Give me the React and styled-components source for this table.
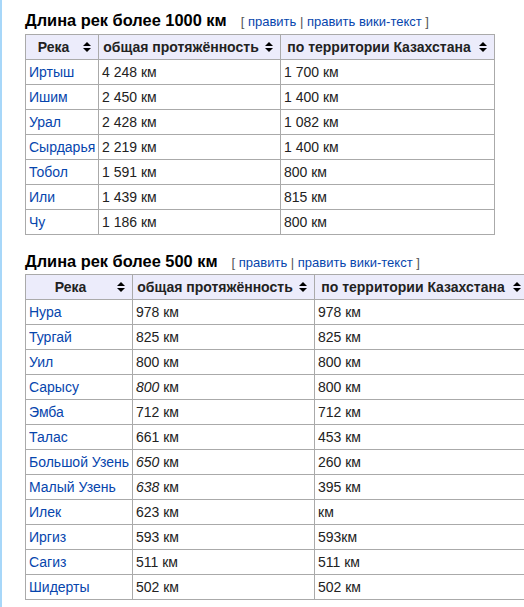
import React from 'react';
import styled, { createGlobalStyle } from 'styled-components';

const GlobalStyle = createGlobalStyle`
  html, body {
    margin: 0;
    padding: 0;
    background: #fff;
    overflow: hidden;
  }
  body {
    font-family: Arial, "Liberation Sans", sans-serif;
  }
`;

const Page = styled.div`
  width: 524px;
  height: 607px;
  overflow: hidden;
  box-sizing: border-box;
  border-left: 2px solid #a7d7f9;
  padding: 10px 0 0 23px;
`;

const Heading = styled.div`
  display: flex;
  align-items: baseline;
  gap: 14px;
  white-space: nowrap;
  margin-top: ${(props) => props.$top || 0}px;
  margin-bottom: ${(props) => props.$bottom || 4}px;
`;

const Title = styled.h3`
  margin: 0;
  font-family: Arial, "Liberation Sans", sans-serif;
  font-size: 16.4px;
  line-height: 20px;
  font-weight: bold;
  color: #000;
`;

const EditSection = styled.span`
  font-size: 13px;
  color: #555;
  a {
    color: #0645ad;
    text-decoration: none;
  }
`;

const Table = styled.table`
  border-collapse: collapse;
  border: 1px solid #aaa;
  font-size: 14px;
  line-height: 18px;
  color: #222;
  background: #fff;
  table-layout: fixed;
  width: ${(props) => props.$width}px;
  flex-shrink: 0;
`;

const Th = styled.th`
  position: relative;
  border: 1px solid #aaa;
  background: #ececfb;
  padding: 3px 21px 3px 4px;
  font-weight: bold;
  text-align: center;
  white-space: nowrap;
  color: #222;
`;

const Td = styled.td`
  border: 1px solid #aaa;
  padding: 3px 3px;
  white-space: nowrap;
  text-align: left;
`;

const RiverLink = styled.a`
  color: #0645ad;
  text-decoration: none;
`;

const SortIcon = styled.svg`
  position: absolute;
  right: 7px;
  top: 50%;
  margin-top: -5px;
`;

function Sort() {
  return (
    <SortIcon width='8' height='10' viewBox='0 0 8 10'>
      <path d='M0 4 L4 0 L8 4 Z M0 6 L8 6 L4 10 Z' fill='#000' />
    </SortIcon>
  );
}

const BIG = [
  ['Иртыш', '4 248 км', '1 700 км'],
  ['Ишим', '2 450 км', '1 400 км'],
  ['Урал', '2 428 км', '1 082 км'],
  ['Сырдарья', '2 219 км', '1 400 км'],
  ['Тобол', '1 591 км', '800 км'],
  ['Или', '1 439 км', '815 км'],
  ['Чу', '1 186 км', '800 км'],
];

// italic numbers are marked with a leading "*"
const MEDIUM = [
  ['Нура', '978 км', '978 км'],
  ['Тургай', '825 км', '825 км'],
  ['Уил', '800 км', '800 км'],
  ['Сарысу', '*800', '800 км'],
  ['Эмба', '712 км', '712 км'],
  ['Талас', '661 км', '453 км'],
  ['Большой Узень', '*650', '260 км'],
  ['Малый Узень', '*638', '395 км'],
  ['Илек', '623 км', 'км'],
  ['Иргиз', '593 км', '593км'],
  ['Сагиз', '511 км', '511 км'],
  ['Шидерты', '502 км', '502 км'],
];

function Length({ value }) {
  if (value.startsWith('*')) {
    return (
      <>
        <i>{value.slice(1)}</i> км
      </>
    );
  }
  return value;
}

function RiverTable({ rows, widths }) {
  const total = widths.reduce((a, b) => a + b, 0);
  return (
    <Table $width={total}>
      <colgroup>
        {widths.map((w, i) => (
          <col key={i} style={{ width: w }} />
        ))}
      </colgroup>
      <thead>
        <tr>
          <Th>
            Река
            <Sort />
          </Th>
          <Th>
            общая протяжённость
            <Sort />
          </Th>
          <Th>
            по территории Казахстана
            <Sort />
          </Th>
        </tr>
      </thead>
      <tbody>
        {rows.map((r) => (
          <tr key={r[0]}>
            <Td>
              <RiverLink href='#'>{r[0]}</RiverLink>
            </Td>
            <Td>
              <Length value={r[1]} />
            </Td>
            <Td>{r[2]}</Td>
          </tr>
        ))}
      </tbody>
    </Table>
  );
}

function Edit() {
  return (
    <EditSection>
      [ <a href='#'>править</a> | <a href='#'>править вики-текст</a> ]
    </EditSection>
  );
}

export default function App() {
  return (
    <Page>
      <GlobalStyle />
      <Heading>
        <Title>Длина рек более 1000 км</Title>
        <Edit />
      </Heading>
      <RiverTable rows={BIG} widths={[73, 182, 214]} />
      <Heading $top={16} $bottom={3}>
        <Title>Длина рек более 500 км</Title>
        <Edit />
      </Heading>
      <RiverTable rows={MEDIUM} widths={[107, 182, 214]} />
    </Page>
  );
}
